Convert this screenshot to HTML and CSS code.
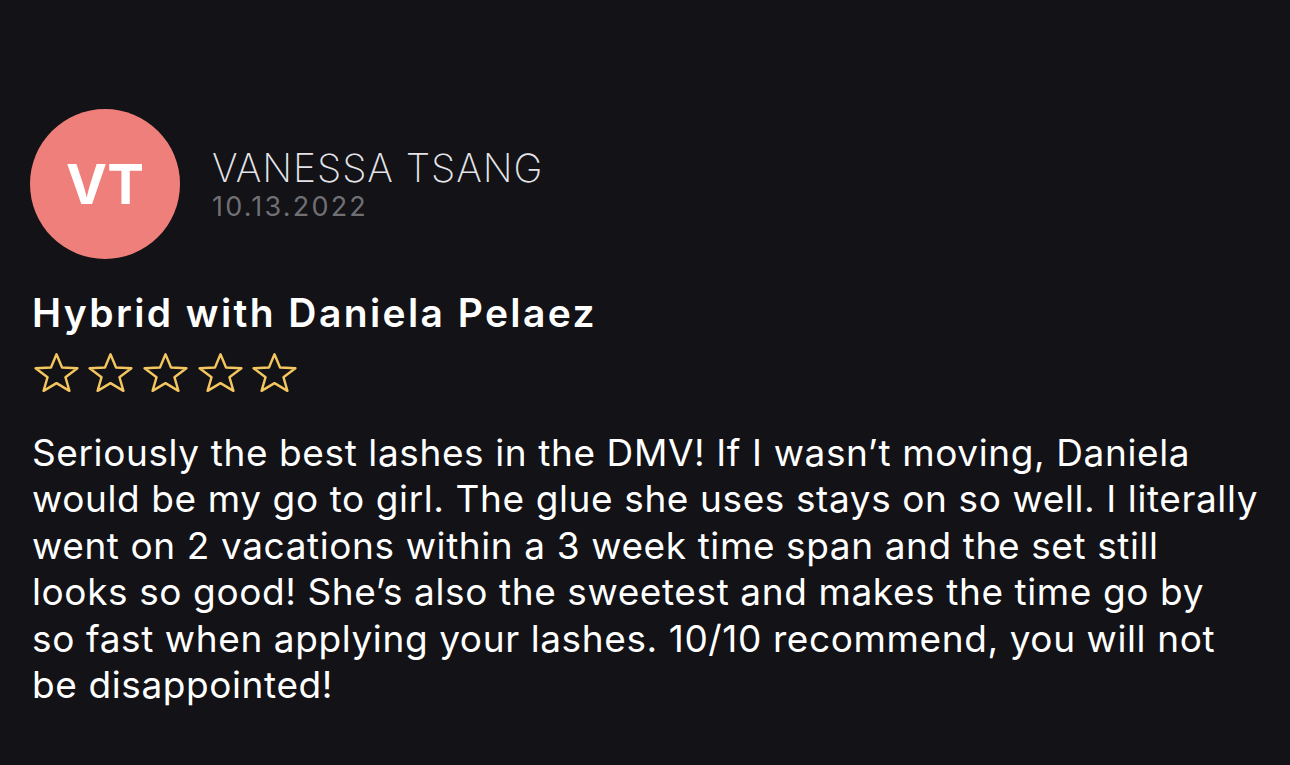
FILE: index.html
```html
<!DOCTYPE html>
<html lang="en">
<head>
<meta charset="utf-8">
<title>Review</title>
<link rel="stylesheet" href="styles.css">
</head>
<body>
<main class="review">
  <header class="author">
    <div class="avatar">VT</div>
    <div class="meta">
      <div class="name">VANESSA TSANG</div>
      <div class="date">10.13.2022</div>
    </div>
  </header>
  <h1 class="title">Hybrid with Daniela Pelaez</h1>
  <div class="stars">
    <svg class="star" viewBox="0 0 45 39"><path d="M22.5 1.26L28.03 14.51 43.42 15.25 31.44 24.17 35.43 37.87 22.5 30.15 9.57 37.87 13.56 24.17 1.58 15.25 16.97 14.51Z"/></svg>
    <svg class="star" viewBox="0 0 45 39"><path d="M22.5 1.26L28.03 14.51 43.42 15.25 31.44 24.17 35.43 37.87 22.5 30.15 9.57 37.87 13.56 24.17 1.58 15.25 16.97 14.51Z"/></svg>
    <svg class="star" viewBox="0 0 45 39"><path d="M22.5 1.26L28.03 14.51 43.42 15.25 31.44 24.17 35.43 37.87 22.5 30.15 9.57 37.87 13.56 24.17 1.58 15.25 16.97 14.51Z"/></svg>
    <svg class="star" viewBox="0 0 45 39"><path d="M22.5 1.26L28.03 14.51 43.42 15.25 31.44 24.17 35.43 37.87 22.5 30.15 9.57 37.87 13.56 24.17 1.58 15.25 16.97 14.51Z"/></svg>
    <svg class="star" viewBox="0 0 45 39"><path d="M22.5 1.26L28.03 14.51 43.42 15.25 31.44 24.17 35.43 37.87 22.5 30.15 9.57 37.87 13.56 24.17 1.58 15.25 16.97 14.51Z"/></svg>
  </div>
  <p class="body">Seriously the best lashes in the DMV! If I wasn’t moving, Daniela<br>
would be my go to girl. The glue she uses stays on so well. I literally<br>
went on 2 vacations within a 3 week time span and the set still<br>
looks so good! She’s also the sweetest and makes the time go by<br>
so fast when applying your lashes. 10/10 recommend, you will not<br>
be disappointed!</p>
</main>
</body>
</html>
```
FILE: styles.css
```css
html, body {
  margin: 0;
  padding: 0;
  background: #121217;
}
body {
  width: 1290px;
  height: 765px;
  overflow: hidden;
  font-family: Inter, "Liberation Sans", sans-serif;
  color: #ffffff;
}
.review {
  padding: 109px 0 0 32px;
  display: flex;
  flex-direction: column;
}
.author {
  display: flex;
  align-items: center;
  gap: 32px;
  margin-left: -2px;
}
.avatar {
  flex: none;
  width: 150px;
  height: 150px;
  border-radius: 50%;
  background: #ef7f7a;
  color: #ffffff;
  font-size: 55px;
  font-weight: 700;
  display: flex;
  align-items: center;
  justify-content: center;
}
.meta {
  display: flex;
  flex-direction: column;
  gap: 2px;
}
.name {
  font-size: 39px;
  font-weight: 200;
  letter-spacing: 0.9px;
  line-height: 44px;
  color: #e4e4e8;
}
.date {
  font-size: 27px;
  font-weight: 400;
  letter-spacing: 2.2px;
  line-height: 30px;
  color: #6f6f74;
}
.title {
  margin: 31px 0 0 0;
  font-size: 39px;
  font-weight: 600;
  letter-spacing: 2.4px;
  line-height: 46px;
}
.stars {
  display: flex;
  gap: 9.7px;
  margin-top: 17px;
  margin-left: 1.6px;
}
.star {
  flex: none;
  width: 45px;
  height: 39px;
  fill: none;
  stroke: #f3c65f;
  stroke-width: 2.4;
  stroke-linejoin: round;
}
.body {
  margin: 38px 0 0 0;
  font-size: 37px;
  line-height: 46.4px;
  font-weight: 400;
  letter-spacing: 0.6px;
  white-space: nowrap;
}
```
